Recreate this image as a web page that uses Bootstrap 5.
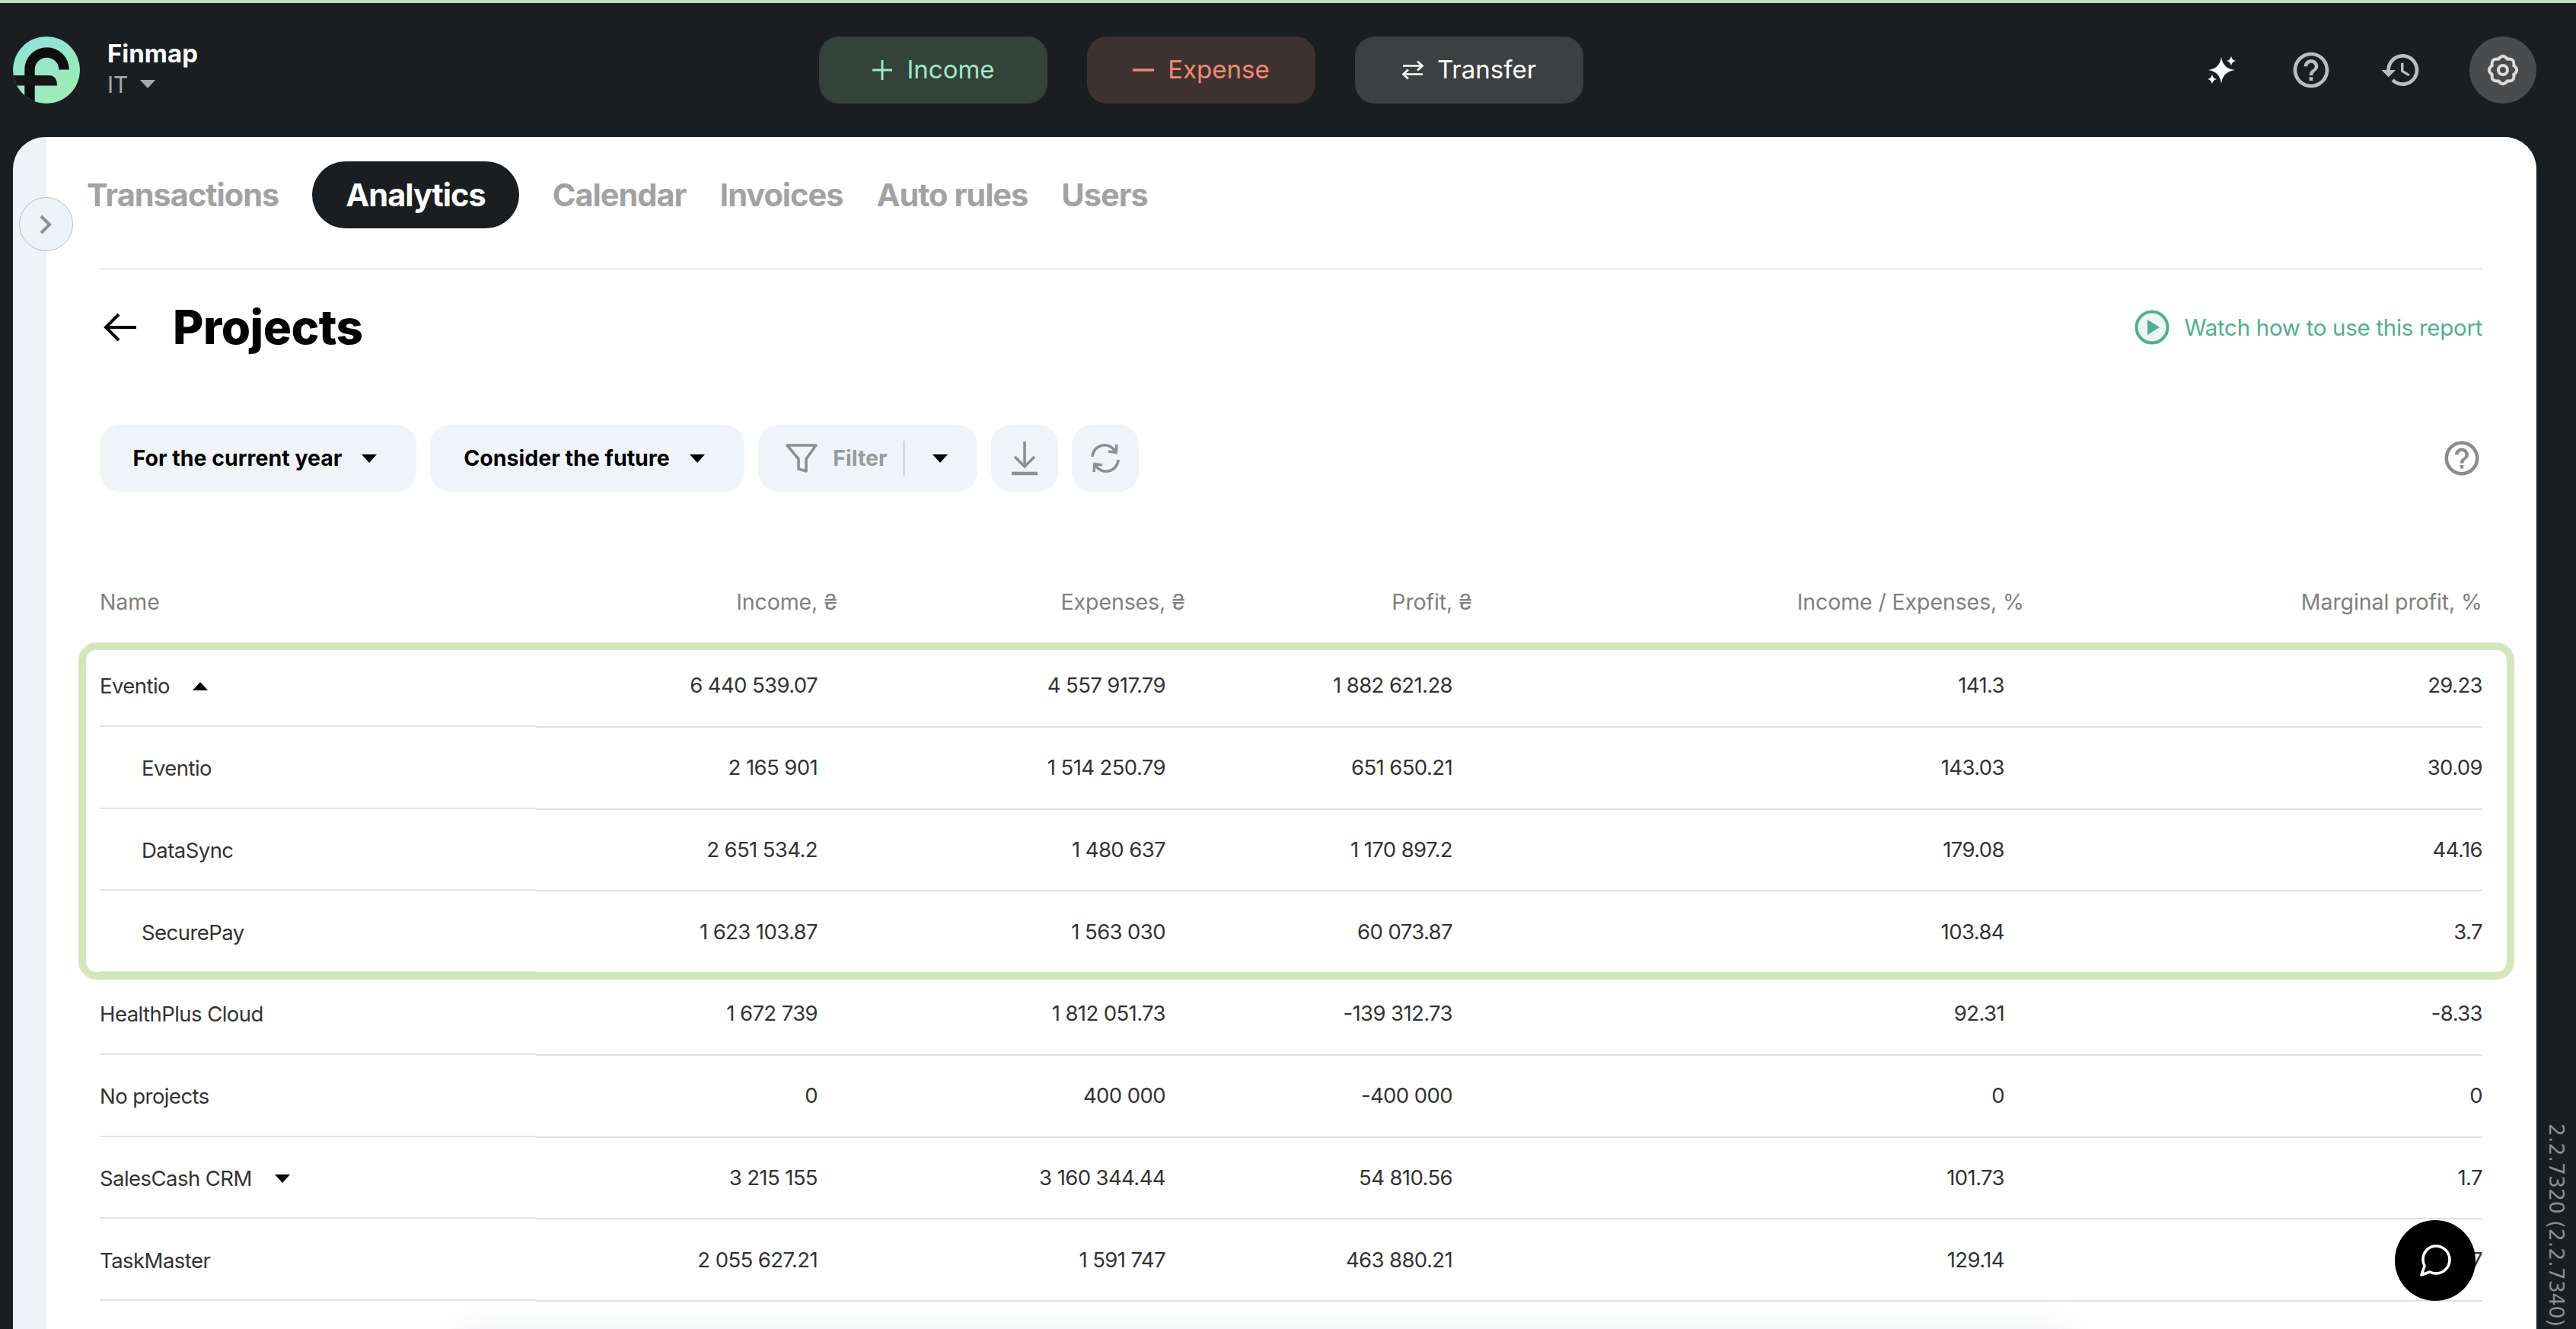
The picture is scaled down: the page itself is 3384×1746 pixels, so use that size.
<!DOCTYPE html>
<html lang="en">
<head>
<meta charset="utf-8">
<title>Finmap - Projects</title>
<link href="https://cdn.jsdelivr.net/npm/bootstrap@5.3.0/dist/css/bootstrap.min.css" rel="stylesheet">
<style>
html,body{height:100%}
body{background:#1a1e21;font-family:Inter,"Liberation Sans",sans-serif;overflow:hidden;color:#333}
.top-line{height:4px;background:#c4d9c0}
.app-head{height:176px;padding-left:17px;padding-right:52px}
.brand-box{width:1059px;gap:36px}
.logo-svg{width:88px;height:88px;display:block}
.brand-name{font-size:33px;font-weight:700;color:#fff;line-height:42px;margin-top:-7px}
.brand-sub{font-size:30px;color:#a9a9a9;line-height:36px;gap:16px;margin-top:2px}
.tri{display:inline-block;width:0;height:0;border-left:10px solid transparent;border-right:10px solid transparent;border-top:11px solid #000}
.tri-up{border-top:0;border-bottom:11px solid #000}
.tri-grey{border-top-color:#a9a9a9}
.act-group{gap:52px}
.act-btn{width:300px;height:88px;border-radius:26px;font-size:33px;gap:18px;border:0}
.act-in,.act-in:hover{background:#33423b;color:#9fe8c6}
.act-ex,.act-ex:hover{background:#3e3230;color:#f08a70}
.act-tr,.act-tr:hover{background:#3d4041;color:#fff}
.ic-box{width:88px;height:88px}
.ic-set{background:#4a4b4d;border-radius:50%;margin-left:16px}
.right-icons{gap:30px}
.panel-row{height:calc(100vh - 180px);padding-left:17px}
.panel-wrap{background:#eef3f8;border-radius:42px 42px 0 0;width:3315px;padding-left:44px;overflow:hidden}
.panel-main{background:#fff;height:100%;padding:32px 71px 0 70px;border-radius:0 42px 0 0}
.gutter{width:52px}
.ver-text{writing-mode:vertical-rl;font-family:"DejaVu Sans",sans-serif;font-size:26.7px;color:#8b8f91;line-height:40px;white-space:nowrap;padding-bottom:3px}
.toggle-side{left:25px;top:259px;width:71px;height:71px;border-radius:50%;background:#eef3f8;border:1.5px solid #bcbcbc;z-index:3}
.chev-svg{margin-right:4px}
.tab-list{gap:44px;margin-left:-17px;height:88px}
.tab-item{font-size:41.5px;font-weight:700;color:#a2a2a2;line-height:88px;padding:0;text-decoration:none;letter-spacing:-1px}
.tab-item.on{background:#1a1e21;color:#fff;border-radius:44px;padding:0 44px}
.sep-line{height:2px;background:#e9e9e9;margin-top:52px}
.title-row{height:152px}
.back-svg{width:46px;height:40px;margin-left:5px}
.page-title{font-size:62px;font-weight:800;color:#000;margin:0 0 0 45px;line-height:76px;letter-spacing:-.5px}
.watch-link{color:#4fb08c;font-size:29.5px;gap:20px;text-decoration:none;letter-spacing:-.3px}
.tool-row{height:88px;margin-top:52px;gap:18px}
.tool-btn{height:88px;background:#f0f4f8;border-radius:26px;border:0;color:#000;font-size:28.5px;font-weight:700;padding:0}
.tool-btn:hover{background:#f0f4f8}
.tb-a{width:416px;gap:26px;padding-right:8px}
.tb-b{width:413px;gap:26px;padding-right:8px}
.tb-f{width:288px;color:#9a9a9a;padding-right:3px}
.tb-s{width:88px}
.f-ic{margin-right:20px}
.f-sep{width:3px;height:47px;background:#d8dcdf;margin:0 36px 0 20px}
.tools-gap{margin-top:89px}
.fin-table{table-layout:fixed;width:3130px;border-collapse:separate;border-spacing:0;margin:0;font-size:27.5px;color:#333}
.fin-table th{font-weight:400;color:#808080;height:113px;padding:0;vertical-align:middle;font-size:28.5px;letter-spacing:-.1px}
.fin-table td{height:107.75px;padding:0 26px 0 0;border-bottom:2px solid #e2e2e2;vertical-align:middle;letter-spacing:-.6px}
.fin-table td:last-child{padding-right:0}
.fin-table td:first-child{border-bottom:0;background:linear-gradient(#e2e2e2,#e2e2e2) no-repeat 0 calc(100% - 1px)/100% 2px;padding:0;letter-spacing:-.55px}
.name-wrap{gap:30px}
.child-name{padding-left:55px}
.hl-box{left:-28px;right:-42px;top:109px;height:443px;border:10px solid #d4e7bc;border-radius:24px;pointer-events:none}
.chat-btn{right:132px;bottom:37px;width:106px;height:106px;border-radius:50%;background:#000;border:0;z-index:4}
.foot-fade{left:600px;width:2120px;top:1745px;height:60px;background:#e9edf2;filter:blur(20px);opacity:.9;z-index:2}
</style>
</head>
<body>
<div class="top-line"></div>
<header class="app-head d-flex align-items-center">
  <div class="brand-box d-flex align-items-center">
    <svg class="logo-svg" viewBox="0 0 88 88">
      <defs>
        <linearGradient id="lg" x1="0.2" y1="0" x2="0.8" y2="1"><stop offset="0" stop-color="#8fe2da"/><stop offset="1" stop-color="#a0ecb4"/></linearGradient>
        <clipPath id="cc"><circle cx="44" cy="44" r="44"/></clipPath>
      </defs>
      <circle cx="44" cy="44" r="44" fill="url(#lg)"/>
      <g clip-path="url(#cc)" fill="none">
        <path d="M22 90V43.5A22.5 22.5 0 0 1 67 43.5" stroke="#0e0e0e" stroke-width="13.4"/>
        <path d="M-2 51H47Q58 51 58 64.4H-2Z" fill="#161616"/>
      </g>
    </svg>
    <div>
      <div class="brand-name">Finmap</div>
      <div class="brand-sub d-flex align-items-center">IT <span class="tri tri-grey"></span></div>
    </div>
  </div>
  <div class="act-group d-flex">
    <button class="btn act-btn act-in d-flex align-items-center justify-content-center">
      <svg width="28" height="28" viewBox="0 0 28 28"><path d="M14 1V27M1 14H27" stroke="#9fe8c6" stroke-width="3" fill="none"/></svg>Income</button>
    <button class="btn act-btn act-ex d-flex align-items-center justify-content-center">
      <svg width="28" height="28" viewBox="0 0 28 28"><path d="M0 14H28" stroke="#f08a70" stroke-width="3.4" fill="none"/></svg>Expense</button>
    <button class="btn act-btn act-tr d-flex align-items-center justify-content-center">
      <svg width="28" height="28" viewBox="0 0 28 28"><path d="M1 8.5H26M20 2.5L26.5 8.5L20 14.5M27 19.5H2M8 13.5L1.5 19.5L8 25.5" stroke="#fff" stroke-width="2.6" fill="none"/></svg>Transfer</button>
  </div>
  <div class="right-icons d-flex align-items-center ms-auto">
    <div class="ic-box d-flex align-items-center justify-content-center">
      <svg width="48" height="48" viewBox="0 0 48 48" fill="#fff"><path d="M24 7Q26 22 42 24Q26 26 24 42Q22 26 7 24Q22 22 24 7Z"/><path d="M37 5.500Q37.800 11 43 12Q37.800 13 37 18.500Q36.200 13 31 12Q36.200 11 37 5.500Z"/><path d="M12 29.500Q12.800 35 18 36Q12.800 37 12 42.500Q11.200 37 6 36Q11.200 35 12 29.500Z"/></svg>
    </div>
    <div class="ic-box d-flex align-items-center justify-content-center">
      <svg width="56" height="56" viewBox="0 0 24 24" fill="#bdbdbd"><path d="M11 18h2v-2h-2v2zm1-16C6.480 2 2 6.480 2 12s4.480 10 10 10 10-4.480 10-10S17.520 2 12 2zm0 18c-4.410 0-8-3.590-8-8s3.590-8 8-8 8 3.590 8 8-3.590 8-8 8zm0-14c-2.210 0-4 1.790-4 4h2c0-1.100.9-2 2-2s2 .9 2 2c0 2-3 1.750-3 5h2c0-2.250 3-2.500 3-5 0-2.210-1.790-4-4-4z"/></svg>
    </div>
    <div class="ic-box d-flex align-items-center justify-content-center">
      <svg width="56" height="56" viewBox="0 0 24 24" fill="#bdbdbd"><path d="M13 3c-4.970 0-9 4.030-9 9H1l3.890 3.890.07.14L9 12H6c0-3.870 3.130-7 7-7s7 3.130 7 7-3.130 7-7 7c-1.930 0-3.680-.79-4.940-2.060l-1.420 1.420C8.270 19.990 10.510 21 13 21c4.970 0 9-4.030 9-9s-4.030-9-9-9zm-1 5v5l4.280 2.540.72-1.210-3.500-2.080V8H12z"/></svg>
    </div>
    <div class="ic-box ic-set d-flex align-items-center justify-content-center">
      <svg width="48" height="48" viewBox="0 0 48 48" fill="none" stroke="#dcdcdc" stroke-width="4"><path d="M38.300 18.100Q46 24 38.300 29.900Q39.600 39.600 29.900 38.300Q24 46 18.100 38.300Q8.400 39.600 9.700 29.900Q2 24 9.700 18.100Q8.400 8.400 18.100 9.700Q24 2 29.900 9.700Q39.600 8.400 38.300 18.100Z"/><circle cx="24" cy="24" r="6"/></svg>
    </div>
  </div>
</header>

<div class="panel-row d-flex">
  <div class="panel-wrap">
    <main class="panel-main">
      <nav class="tab-list d-flex align-items-center">
        <a class="tab-item" href="#">Transactions</a>
        <a class="tab-item on" href="#">Analytics</a>
        <a class="tab-item" href="#">Calendar</a>
        <a class="tab-item" href="#">Invoices</a>
        <a class="tab-item" href="#">Auto rules</a>
        <a class="tab-item" href="#">Users</a>
      </nav>
      <div class="sep-line"></div>
      <div class="title-row d-flex align-items-center">
        <svg class="back-svg" viewBox="0 0 46 40" fill="none" stroke="#000" stroke-width="4"><path d="M43 20H4M20 3L3 20L20 37"/></svg>
        <h1 class="page-title">Projects</h1>
        <a class="watch-link d-flex align-items-center ms-auto" href="#">
          <svg width="46" height="46" viewBox="0 0 46 46"><circle cx="23" cy="23" r="20.500" fill="#eef3f8" stroke="#4fb08c" stroke-width="4"/><path d="M17 13L33 23L17 33Z" fill="#4fb08c"/></svg>
          Watch how to use this report</a>
      </div>
      <div class="tool-row d-flex align-items-center">
        <button class="btn tool-btn tb-a d-flex align-items-center justify-content-center">For the current year <span class="tri"></span></button>
        <button class="btn tool-btn tb-b d-flex align-items-center justify-content-center">Consider the future <span class="tri"></span></button>
        <button class="btn tool-btn tb-f d-flex align-items-center justify-content-center">
          <svg class="f-ic" width="42" height="38" viewBox="0 0 42 38" fill="none" stroke="#8f8f8f" stroke-width="3.6" stroke-linejoin="round"><path d="M2 2H40L27 20V36L17 33V20Z"/></svg>Filter<span class="f-sep"></span><span class="tri"></span></button>
        <button class="btn tool-btn tb-s d-flex align-items-center justify-content-center">
          <svg width="36" height="46" viewBox="0 0 36 46" fill="none" stroke="#8f8f8f" stroke-width="3.6"><path d="M18 1V33M5 21L18 34L31 21"/><path d="M1 43H35" stroke-width="4.500"/></svg></button>
        <button class="btn tool-btn tb-s d-flex align-items-center justify-content-center">
          <svg width="40" height="40" viewBox="0 0 40 40" fill="none" stroke="#8f8f8f" stroke-width="3.6"><path d="M3 18A16 16 0 0 1 33 11"/><path d="M37 22A16 16 0 0 1 7 29"/><path d="M35 2L34 12.500L24 11M5 38L6 27.500L16 29"/></svg></button>
        <svg class="ms-auto" width="54" height="54" viewBox="0 0 24 24" fill="#8c8c8c"><path d="M11 18h2v-2h-2v2zm1-16C6.480 2 2 6.480 2 12s4.480 10 10 10 10-4.480 10-10S17.520 2 12 2zm0 18c-4.410 0-8-3.590-8-8s3.590-8 8-8 8 3.590 8 8-3.590 8-8 8zm0-14c-2.210 0-4 1.790-4 4h2c0-1.100.9-2 2-2s2 .9 2 2c0 2-3 1.750-3 5h2c0-2.250 3-2.500 3-5 0-2.210-1.790-4-4-4z"/></svg>
      </div>
      <div class="tools-gap position-relative">
        <table class="table fin-table text-end">
          <colgroup><col style="width:573px"><col style="width:396px"><col style="width:457px"><col style="width:377px"><col style="width:725px"><col style="width:602px"></colgroup>
          <thead>
            <tr><th class="text-start">Name</th><th>Income, ₴</th><th>Expenses, ₴</th><th>Profit, ₴</th><th>Income / Expenses, %</th><th>Marginal profit, %</th></tr>
          </thead>
          <tbody>
            <tr><td class="text-start"><span class="name-wrap d-inline-flex align-items-center">Eventio <span class="tri tri-up"></span></span></td><td>6 440 539.07</td><td>4 557 917.79</td><td>1 882 621.28</td><td>141.3</td><td>29.23</td></tr>
            <tr><td class="text-start"><span class="child-name">Eventio</span></td><td>2 165 901</td><td>1 514 250.79</td><td>651 650.21</td><td>143.03</td><td>30.09</td></tr>
            <tr><td class="text-start"><span class="child-name">DataSync</span></td><td>2 651 534.2</td><td>1 480 637</td><td>1 170 897.2</td><td>179.08</td><td>44.16</td></tr>
            <tr><td class="text-start"><span class="child-name">SecurePay</span></td><td>1 623 103.87</td><td>1 563 030</td><td>60 073.87</td><td>103.84</td><td>3.7</td></tr>
            <tr><td class="text-start">HealthPlus Cloud</td><td>1 672 739</td><td>1 812 051.73</td><td>-139 312.73</td><td>92.31</td><td>-8.33</td></tr>
            <tr><td class="text-start">No projects</td><td>0</td><td>400 000</td><td>-400 000</td><td>0</td><td>0</td></tr>
            <tr><td class="text-start"><span class="name-wrap d-inline-flex align-items-center">SalesCash CRM <span class="tri"></span></span></td><td>3 215 155</td><td>3 160 344.44</td><td>54 810.56</td><td>101.73</td><td>1.7</td></tr>
            <tr><td class="text-start">TaskMaster</td><td>2 055 627.21</td><td>1 591 747</td><td>463 880.21</td><td>129.14</td><td>22.57</td></tr>
          </tbody>
        </table>
        <div class="hl-box position-absolute"></div>
      </div>
    </main>
  </div>
  <div class="gutter d-flex justify-content-center align-items-end"><span class="ver-text">2.2.7320 (2.2.7340)</span></div>
</div>

<button class="toggle-side btn position-fixed p-0 d-flex align-items-center justify-content-center">
  <svg class="chev-svg" width="22" height="28" viewBox="0 0 22 28" fill="none" stroke="#8f8f8f" stroke-width="4"><path d="M6 3L17 14L6 25"/></svg>
</button>
<div class="foot-fade position-fixed"></div>
<button class="chat-btn btn position-fixed p-0 d-flex align-items-center justify-content-center">
  <svg width="48" height="48" viewBox="0 0 48 48" fill="none" stroke="#fff" stroke-width="3.6" stroke-linejoin="round"><path d="M25 5C15 5 8 13 8 23C8 27 9 29 10 31L6 43L17 39C20 41 22 41 25 41C35 41 43 33 43 23C43 13 35 5 25 5Z"/></svg>
</button>
<script src="https://cdn.jsdelivr.net/npm/bootstrap@5.3.0/dist/js/bootstrap.bundle.min.js"></script>
</body>
</html>
